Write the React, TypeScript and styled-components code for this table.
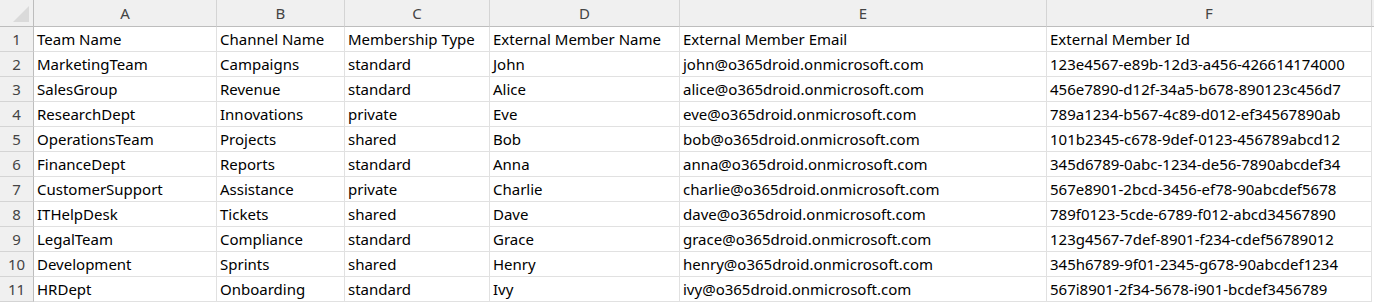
import React from 'react';
import styled, { createGlobalStyle } from 'styled-components';

const GlobalStyle = createGlobalStyle`
  html, body {
    margin: 0;
    padding: 0;
    background: #ffffff;
    overflow: hidden;
  }
`;

const columns = [
  { letter: 'A', width: 183 },
  { letter: 'B', width: 128 },
  { letter: 'C', width: 145 },
  { letter: 'D', width: 190 },
  { letter: 'E', width: 367 },
  { letter: 'F', width: 325 },
];

const rows: string[][] = [
  ['Team Name', 'Channel Name', 'Membership Type', 'External Member Name', 'External Member Email', 'External Member Id'],
  ['MarketingTeam', 'Campaigns', 'standard', 'John', 'john@o365droid.onmicrosoft.com', '123e4567-e89b-12d3-a456-426614174000'],
  ['SalesGroup', 'Revenue', 'standard', 'Alice', 'alice@o365droid.onmicrosoft.com', '456e7890-d12f-34a5-b678-890123c456d7'],
  ['ResearchDept', 'Innovations', 'private', 'Eve', 'eve@o365droid.onmicrosoft.com', '789a1234-b567-4c89-d012-ef34567890ab'],
  ['OperationsTeam', 'Projects', 'shared', 'Bob', 'bob@o365droid.onmicrosoft.com', '101b2345-c678-9def-0123-456789abcd12'],
  ['FinanceDept', 'Reports', 'standard', 'Anna', 'anna@o365droid.onmicrosoft.com', '345d6789-0abc-1234-de56-7890abcdef34'],
  ['CustomerSupport', 'Assistance', 'private', 'Charlie', 'charlie@o365droid.onmicrosoft.com', '567e8901-2bcd-3456-ef78-90abcdef5678'],
  ['ITHelpDesk', 'Tickets', 'shared', 'Dave', 'dave@o365droid.onmicrosoft.com', '789f0123-5cde-6789-f012-abcd34567890'],
  ['LegalTeam', 'Compliance', 'standard', 'Grace', 'grace@o365droid.onmicrosoft.com', '123g4567-7def-8901-f234-cdef56789012'],
  ['Development', 'Sprints', 'shared', 'Henry', 'henry@o365droid.onmicrosoft.com', '345h6789-9f01-2345-g678-90abcdef1234'],
  ['HRDept', 'Onboarding', 'standard', 'Ivy', 'ivy@o365droid.onmicrosoft.com', '567i8901-2f34-5678-i901-bcdef3456789'],
];

const Sheet = styled.div`
  display: grid;
  grid-template-columns: 34px ${columns.map((c) => `${c.width}px`).join(' ')} 1fr;
  grid-auto-rows: 25px;
  grid-template-rows: 27px;
  font-family: 'Noto Sans', 'Open Sans', sans-serif;
  font-size: 15px;
  color: #000;
`;

const Corner = styled.div`
  position: relative;
  background: #f0f0f0;
  border-right: 1px solid #bdbdbd;
  border-bottom: 1px solid #bdbdbd;

  &::after {
    content: '';
    position: absolute;
    right: 4px;
    bottom: 4px;
    width: 16px;
    height: 16px;
    background: #dadada;
    clip-path: polygon(100% 0, 100% 100%, 0 100%);
  }
`;

const ColHead = styled.div`
  display: flex;
  align-items: center;
  justify-content: center;
  background: #f0f0f0;
  border-right: 1px solid #d4d4d4;
  border-bottom: 1px solid #bdbdbd;
  color: #444;
  font-size: 15px;
  box-sizing: border-box;
`;

const Filler = styled.div<{ $head?: boolean }>`
  background: ${(p) => (p.$head ? '#f0f0f0' : '#ffffff')};
  border-bottom: 1px solid ${(p) => (p.$head ? '#bdbdbd' : 'transparent')};
`;

const RowHead = styled.div`
  display: flex;
  align-items: center;
  justify-content: center;
  background: #f0f0f0;
  border-right: 1px solid #bdbdbd;
  border-bottom: 1px solid #d4d4d4;
  color: #444;
  box-sizing: border-box;
`;

const Cell = styled.div`
  display: flex;
  align-items: center;
  padding: 0 3px;
  border-right: 1px solid #e1e1e1;
  border-bottom: 1px solid #e1e1e1;
  box-sizing: border-box;
  white-space: nowrap;
  overflow: hidden;
`;

export default function App() {
  return (
    <>
      <GlobalStyle />
      <Sheet>
        <Corner />
        {columns.map((c) => (
          <ColHead key={c.letter}>{c.letter}</ColHead>
        ))}
        <Filler $head />
        {rows.map((r, i) => (
          <React.Fragment key={i}>
            <RowHead>{i + 1}</RowHead>
            {r.map((v, j) => (
              <Cell key={j}>{v}</Cell>
            ))}
            <Filler />
          </React.Fragment>
        ))}
      </Sheet>
    </>
  );
}
